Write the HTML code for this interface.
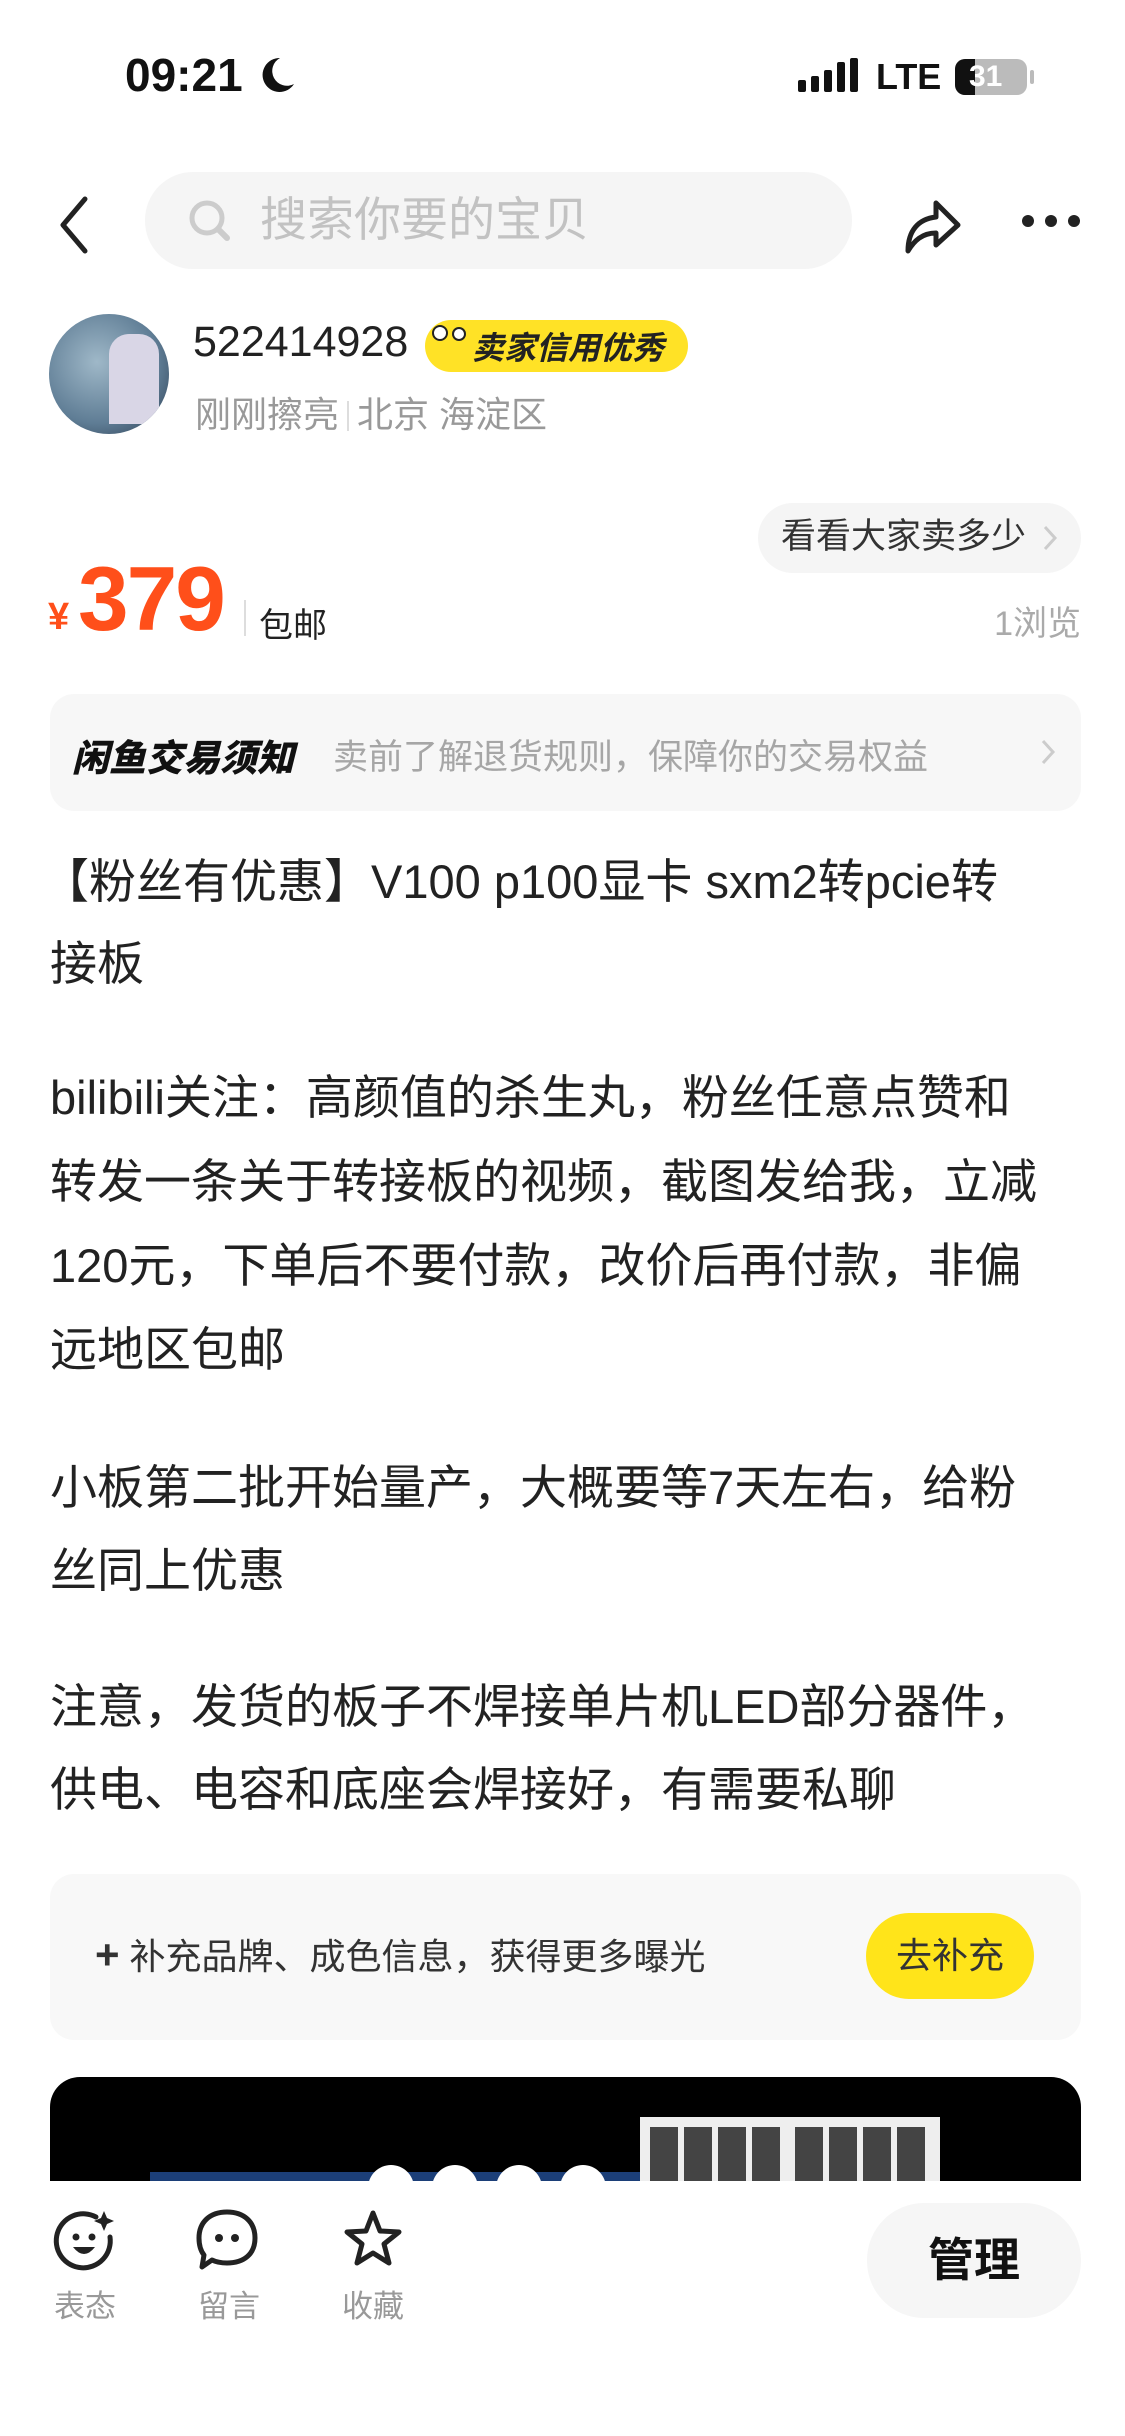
<!DOCTYPE html>
<html><head><meta charset="utf-8"><style>
*{margin:0;padding:0;box-sizing:border-box}
body{width:1125px;height:2436px;background:#fff;position:relative;overflow:hidden;font-family:"Liberation Sans","Noto Sans CJK SC",sans-serif;color:#222}
.a{position:absolute;white-space:nowrap}
.p{position:absolute;left:50px;font-size:47px;line-height:84px;color:#222;white-space:nowrap}
</style></head><body>
<div class="a" style="left:125px;top:48px;font-size:46px;font-weight:bold;color:#111">09:21</div>
<svg class="a" style="left:260px;top:56px" width="36" height="38" viewBox="0 0 36 38"><path d="M20 2 A17 17 0 1 0 34 28 A14 14 0 0 1 20 2Z" fill="#111"/></svg>
<div class="a" style="left:798px;top:58px;display:flex;gap:5px;align-items:flex-end">
<div style="width:8px;height:12px;background:#111;border-radius:2px"></div><div style="width:8px;height:16px;background:#111;border-radius:2px"></div><div style="width:8px;height:22px;background:#111;border-radius:2px"></div><div style="width:8px;height:30px;background:#111;border-radius:2px"></div><div style="width:8px;height:34px;background:#111;border-radius:2px"></div></div>
<div class="a" style="left:876px;top:56px;font-size:36px;font-weight:bold;color:#111">LTE</div>
<div class="a" style="left:955px;top:59px;width:72px;height:36px;border-radius:10px;background:#bbb;overflow:hidden"><div style="width:20px;height:36px;background:#111"></div><div class="a" style="left:14px;top:0;font-size:30px;font-weight:bold;color:#fff;line-height:36px">31</div></div>
<div class="a" style="left:1030px;top:70px;width:4px;height:14px;background:#bbb;border-radius:2px"></div>

<svg class="a" style="left:55px;top:195px" width="40" height="60" viewBox="0 0 40 60"><path d="M30 4 L8 30 L30 56" fill="none" stroke="#222" stroke-width="5" stroke-linecap="round" stroke-linejoin="round"/></svg>
<div class="a" style="left:145px;top:172px;width:707px;height:97px;border-radius:48px;background:#f5f5f5"></div>
<svg class="a" style="left:187px;top:198px" width="46" height="46" viewBox="0 0 46 46"><circle cx="20" cy="20" r="15" fill="none" stroke="#ccc" stroke-width="5"/><path d="M31 31 L40 40" stroke="#ccc" stroke-width="6" stroke-linecap="round"/></svg>
<div class="a" style="left:260px;top:190px;font-size:47px;color:#c2c2c2;line-height:60px">搜索你要的宝贝</div>
<svg class="a" style="left:900px;top:195px" width="64" height="64" viewBox="0 0 64 64"><path d="M36 8 L58 30 L36 50 L36 38 C22 38 14 46 8 56 C8 36 18 24 36 22 Z" fill="none" stroke="#222" stroke-width="5" stroke-linejoin="round"/></svg>
<div class="a" style="left:1022px;top:215px;display:flex;gap:11px"><div style="width:12px;height:12px;border-radius:6px;background:#222"></div><div style="width:12px;height:12px;border-radius:6px;background:#222"></div><div style="width:12px;height:12px;border-radius:6px;background:#222"></div></div>

<div class="a" style="left:49px;top:314px;width:120px;height:120px;border-radius:60px;background:radial-gradient(circle at 40% 40%,#9fb8c8,#5f7d95 60%,#26364a);overflow:hidden"><div style="position:absolute;left:60px;top:20px;width:50px;height:90px;background:#d9d6e6;border-radius:20px 20px 0 0"></div></div>
<div class="a" style="left:193px;top:318px;font-size:43px;color:#222">522414928</div>
<div class="a" style="left:425px;top:320px;width:263px;height:52px;border-radius:26px;background:#ffe226"></div>
<div class="a" style="left:432px;top:325px;width:16px;height:16px;border-radius:8px;background:#fff;border:2px solid #222"></div>
<div class="a" style="left:452px;top:327px;width:14px;height:14px;border-radius:7px;background:#fff;border:2px solid #222"></div>
<div class="a" style="left:472px;top:326px;font-size:32px;font-weight:bold;font-style:italic;color:#222;line-height:44px">卖家信用优秀</div>
<div class="a" style="left:195px;top:386px;font-size:36px;color:#999">刚刚擦亮<span style="display:inline-block;width:2px;height:30px;background:#ddd;margin:0 8px;vertical-align:-4px"></span>北京 海淀区</div>

<div class="a" style="left:758px;top:503px;width:323px;height:70px;border-radius:35px;background:#f5f5f5"></div>
<div class="a" style="left:781px;top:515px;font-size:35px;color:#333;line-height:44px">看看大家卖多少</div>
<svg class="a" style="left:1040px;top:523px" width="20" height="30" viewBox="0 0 20 30"><path d="M5 4 L15 15 L5 26" fill="none" stroke="#ccc" stroke-width="3"/></svg>
<div class="a" style="left:48px;top:596px;font-size:38px;font-weight:bold;color:#ff4f1a">¥</div>
<div class="a" style="left:78px;top:548px;font-size:91px;font-weight:bold;color:#ff4f1a;letter-spacing:-2px">379</div>
<div class="a" style="left:244px;top:600px;width:2px;height:36px;background:#ddd"></div>
<div class="a" style="left:259px;top:598px;font-size:34px;color:#222">包邮</div>
<div class="a" style="right:44px;top:596px;font-size:34px;color:#aaa">1浏览</div>

<div class="a" style="left:50px;top:694px;width:1031px;height:117px;border-radius:24px;background:#f7f7f7"></div>
<div class="a" style="left:72px;top:728px;font-size:37px;font-weight:900;font-style:italic;color:#111">闲鱼交易须知</div>
<div class="a" style="left:333px;top:729px;font-size:35px;color:#a6a6a6">卖前了解退货规则，保障你的交易权益</div>
<svg class="a" style="left:1038px;top:737px" width="20" height="30" viewBox="0 0 20 30"><path d="M5 4 L15 15 L5 26" fill="none" stroke="#ccc" stroke-width="3"/></svg>

<div class="p" style="top:840px;left:42px">【粉丝有优惠】V100 p100显卡 sxm2转pcie转</div>
<div class="p" style="top:922px">接板</div>
<div class="p" style="top:1056px">bilibili关注：高颜值的杀生丸，粉丝任意点赞和</div>
<div class="p" style="top:1140px">转发一条关于转接板的视频，截图发给我，立减</div>
<div class="p" style="top:1224px">120元，下单后不要付款，改价后再付款，非偏</div>
<div class="p" style="top:1308px">远地区包邮</div>
<div class="p" style="top:1446px">小板第二批开始量产，大概要等7天左右，给粉</div>
<div class="p" style="top:1529px">丝同上优惠</div>
<div class="p" style="top:1665px">注意，发货的板子不焊接单片机LED部分器件，</div>
<div class="p" style="top:1748px">供电、电容和底座会焊接好，有需要私聊</div>

<div class="a" style="left:50px;top:1874px;width:1031px;height:166px;border-radius:24px;background:#f8f8f8"></div>
<div class="a" style="left:95px;top:1933px;font-size:36px;color:#333;line-height:44px"><b style="font-size:42px">+</b> 补充品牌、成色信息，获得更多曝光</div>
<div class="a" style="left:866px;top:1913px;width:168px;height:86px;border-radius:43px;background:#ffe41a;font-size:36px;color:#333;line-height:86px;text-align:center">去补充</div>

<div class="a" style="left:50px;top:2077px;width:1031px;height:130px;border-radius:30px 30px 0 0;background:#000;overflow:hidden">
<div style="position:absolute;left:100px;top:95px;width:540px;height:40px;background:#1c3f78"></div>
<div style="position:absolute;left:590px;top:40px;width:300px;height:100px;background:#eee"></div>
<div style="position:absolute;left:600px;top:50px;width:130px;height:80px;background:repeating-linear-gradient(90deg,#444 0 28px,#eee 28px 34px)"></div>
<div style="position:absolute;left:745px;top:50px;width:130px;height:80px;background:repeating-linear-gradient(90deg,#444 0 28px,#eee 28px 34px)"></div>
</div>
<div class="a" style="left:0;top:2181px;width:1125px;height:255px;background:#fff"></div>
<div class="a" style="left:368px;top:2165px;width:46px;height:46px;border-radius:23px;background:#fff"></div>
<div class="a" style="left:432px;top:2165px;width:46px;height:46px;border-radius:23px;background:#fff"></div>
<div class="a" style="left:496px;top:2165px;width:46px;height:46px;border-radius:23px;background:#fff"></div>
<div class="a" style="left:560px;top:2165px;width:46px;height:46px;border-radius:23px;background:#fff"></div>

<svg class="a" style="left:52px;top:2207px" width="66" height="66" viewBox="0 0 66 66"><path d="M44 10 A27 27 0 1 0 58 30" fill="none" stroke="#222" stroke-width="5" stroke-linecap="round"/><path d="M52 4 L55 11 L62 14 L55 17 L52 24 L49 17 L42 14 L49 11Z" fill="#222"/><circle cx="24" cy="30" r="3.5" fill="#222"/><circle cx="40" cy="30" r="3.5" fill="#222"/><path d="M21 40 Q32 54 43 40 Z" fill="#222"/></svg>
<svg class="a" style="left:194px;top:2207px" width="66" height="66" viewBox="0 0 66 66"><path d="M33 5 C50 5 61 15 61 31 C61 47 50 56 33 56 C27 56 22 55 18 53 L8 60 L10 48 C6 43 5 37 5 31 C5 15 16 5 33 5Z" fill="none" stroke="#222" stroke-width="5" stroke-linejoin="round"/><circle cx="25" cy="31" r="4" fill="#222"/><circle cx="41" cy="31" r="4" fill="#222"/></svg>
<svg class="a" style="left:340px;top:2207px" width="66" height="66" viewBox="0 0 66 66"><path d="M33 6 L40 24 L59 25 L44 37 L49 56 L33 46 L17 56 L22 37 L7 25 L26 24Z" fill="none" stroke="#222" stroke-width="5" stroke-linejoin="round"/></svg>
<div class="a" style="left:54px;top:2281px;font-size:31px;color:#999">表态</div>
<div class="a" style="left:198px;top:2281px;font-size:31px;color:#999">留言</div>
<div class="a" style="left:342px;top:2281px;font-size:31px;color:#999">收藏</div>
<div class="a" style="left:867px;top:2203px;width:214px;height:115px;border-radius:57px;background:#f6f6f6;font-size:46px;font-weight:bold;color:#111;line-height:115px;text-align:center">管理</div>
</body></html>
